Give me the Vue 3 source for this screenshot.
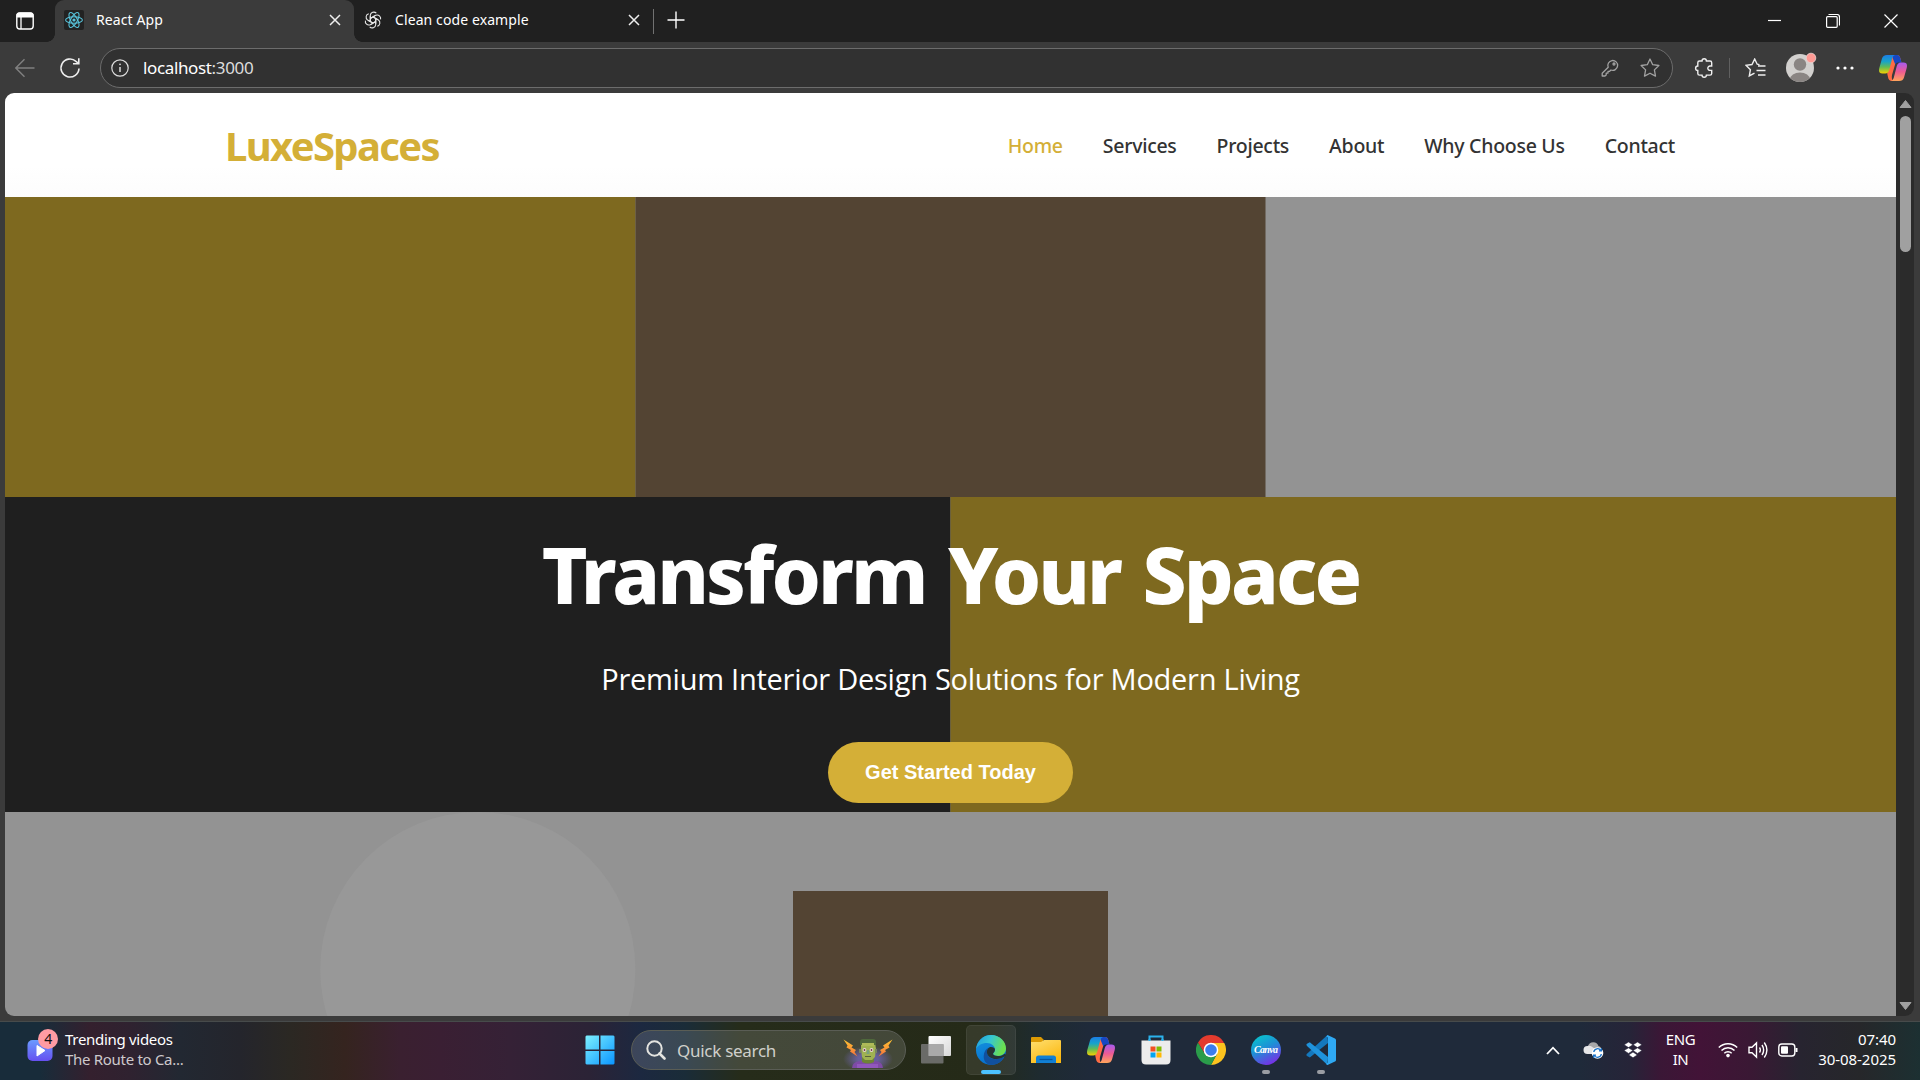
<script setup>
const links = ['Home', 'Services', 'Projects', 'About', 'Why Choose Us', 'Contact']
</script>

<template>
  <div class="screen">
    <header class="tabstrip">
      <div class="workspace">
        <svg width="20" height="20" viewBox="0 0 20 20" fill="none" stroke="#fff"><rect x="1.8" y="2" width="16.4" height="16" rx="3" stroke-width="1.4" /><path d="M2 3.5Q2 2 4 2h12q2 0 2 1.5V6H2z" fill="#fff" /><path d="M6 6v12" stroke-width="1.3" /></svg>
      </div>
      <div class="tab active">
        <svg class="fav" width="20" height="20" viewBox="0 0 20 20"><rect width="20" height="20" rx="2" fill="#222" /><g fill="none" stroke="#58c4dc" stroke-width="1.1"><ellipse cx="10" cy="10" rx="8.4" ry="3.3" /><ellipse cx="10" cy="10" rx="8.4" ry="3.3" transform="rotate(60 10 10)" /><ellipse cx="10" cy="10" rx="8.4" ry="3.3" transform="rotate(120 10 10)" /></g><circle cx="10" cy="10" r="1.6" fill="#58c4dc" /></svg>
        <span>React App</span>
        <svg class="x" width="12" height="12" viewBox="0 0 12 12"><path d="M1 1l10 10M11 1L1 11" /></svg>
      </div>
      <div class="tab">
        <svg class="fav" width="18" height="18" viewBox="0 0 18 18" fill="none" stroke="#e8e8e8" stroke-width="1.1"><g v-for="a in 6" :key="a" :transform="`rotate(${a * 60} 9 9)`"><path d="M6.300 10.500V4.300A3.500 3.500 0 0 1 12.300 2.200M6.300 7.400L10.800 4.800" /></g></svg>
        <span>Clean code example</span>
        <svg class="x" width="12" height="12" viewBox="0 0 12 12"><path d="M1 1l10 10M11 1L1 11" /></svg>
      </div>
      <i class="split"></i>
      <svg class="plus" width="18" height="18" viewBox="0 0 18 18"><path d="M9 0.5v17M0.5 9h17" /></svg>
      <div class="caption">
        <svg width="14" height="14" viewBox="0 0 14 14"><path d="M0 6.5h13" /></svg>
        <svg width="14" height="14" viewBox="0 0 14 14"><path d="M2.5 0.5H11Q13.5 .5 13.5 3v8.5" /><rect x="0.6" y="2.7" width="10.6" height="10.6" rx="1" /></svg>
        <svg width="14" height="14" viewBox="0 0 14 14"><path d="M.5 .5l13 13M13.5 .5L.5 13.5" /></svg>
      </div>
    </header>

    <div class="toolbar">
      <svg class="back" width="20" height="20" viewBox="0 0 20 20"><path d="M19.5 10H1M9.5 1.2L.8 10l8.7 8.8" /></svg>
      <svg class="reload" width="22" height="22" viewBox="0 0 22 22"><path d="M20 11.5a9 9 0 1 1-3-7.2L19.6 6.500M19.8 1.200v5.600h-5.800" /></svg>
      <div class="omnibox">
        <svg width="18" height="18" viewBox="0 0 18 18" fill="none" stroke="#ddd"><circle cx="9" cy="9" r="8.2" stroke-width="1.2" /><path d="M9 8v5" stroke-width="1.5" /><circle cx="9" cy="5.300" r=".9" fill="#ddd" stroke="none" /></svg>
        <span class="url">localhost<b>:3000</b></span>
        <svg class="key" width="18" height="18" viewBox="0 0 18 18"><path d="M7.200 8.300A4.900 4.900 0 1 1 10 11L8.600 12.300H7v1.800H5.200V16L4 17H1.200v-2.700z" /><circle cx="13" cy="5" r="1" /></svg>
        <svg class="star" width="20" height="20" viewBox="0 0 20 20"><path d="M10 1l2.700 5.700 6.200.8-4.500 4.400 1.100 6.200L10 15.200l-5.500 2.900 1.100-6.200L1.100 7.500l6.200-.8z" /></svg>
      </div>
      <div class="actions">
        <svg width="20" height="20" viewBox="0 0 20 20"><path d="M5.500 3H8a2.200 2.200 0 0 1 4.400 0h3.600q1.700 0 1.700 1.700v3.300H16a2.200 2.200 0 1 0 0 4.400h1.700v3q0 1.700-1.700 1.700h-3.600a2.200 2.200 0 0 1-4.400 0H5.500Q3.800 17.100 3.800 15.400v-3a2.200 2.200 0 0 1 0-4.400V4.700Q3.800 3 5.500 3z" /></svg>
        <i></i>
        <svg width="21" height="20" viewBox="0 0 21 20"><path d="M14.500 6.600l-2.300-.4L9.700 1 7 6.500l-6 .8L5.400 11.700l-1.100 6.200 5.200-2.800M13 8h7.500M11.500 12.500h9M13 17h7.500" /></svg>
        <svg class="avatar" width="32" height="32" viewBox="0 0 32 32"><defs><clipPath id="av"><circle cx="15" cy="17" r="14" /></clipPath></defs><g clip-path="url(#av)" stroke="none"><rect width="32" height="32" fill="#d2d0ce" /><circle cx="15" cy="13.500" r="6.200" fill="#8a8583" /><ellipse cx="15" cy="28.500" rx="10" ry="7" fill="#8a8583" /></g><circle cx="26" cy="7" r="4.800" fill="#ff9a94" stroke="#e9d6d4" stroke-width=".8" /></svg>
        <svg width="18" height="6" viewBox="0 0 18 6"><g fill="#fff" stroke="none"><circle cx="2" cy="3" r="1.600" /><circle cx="9" cy="3" r="1.600" /><circle cx="16" cy="3" r="1.600" /></g></svg>
        <svg width="28" height="26" viewBox="0 0 28 26"><use href="#copilot" /></svg>
      </div>
    </div>

    <div class="viewport">
      <div class="page">
        <nav class="nav">
          <span class="logo">LuxeSpaces</span>
          <ul>
            <li v-for="(l, i) in links" :key="l" :class="{ on: i === 0 }">{{ l }}</li>
          </ul>
        </nav>
        <section class="hero">
          <svg class="art" width="1891" height="819" viewBox="0 0 1891 819">
            <rect width="1891" height="819" fill="#939393" />
            <rect width="630.500" height="300" fill="#7e691f" />
            <rect x="630.500" width="630" height="300" fill="#534433" />
            <rect y="300" width="945.500" height="315" fill="#1f1f1f" />
            <rect x="945.500" y="300" width="945.500" height="315" fill="#7e691f" />
            <circle cx="472.800" cy="772.600" r="157.600" fill="#989898" />
            <rect x="788" y="694" width="315" height="125" fill="#534433" />
          </svg>
          <h1>Transform Your Space</h1>
          <p>Premium Interior Design Solutions for Modern Living</p>
          <button>Get Started Today</button>
        </section>
      </div>
      <div class="scroll">
        <svg width="13" height="10" viewBox="0 0 13 10"><path d="M6.500 1.500L12 8.500H1z" /></svg>
        <i></i>
        <svg class="down" width="13" height="10" viewBox="0 0 13 10"><path d="M6.500 8.500L12 1.500H1z" /></svg>
      </div>
    </div>

    <footer class="taskbar">
      <div class="widget">
        <svg width="28" height="32" viewBox="0 0 28 32"><defs><linearGradient id="vid" x2="0" y2="1"><stop stop-color="#6b9bff" /><stop offset="1" stop-color="#6650f0" /></linearGradient></defs><rect x=".5" y="10" width="25" height="21" rx="5" fill="url(#vid)" /><path d="M10 15.500l8 5-8 5.500z" fill="#fff" stroke="#fff" stroke-linejoin="round" /></svg>
        <em>4</em>
        <div><span>Trending videos</span><small>The Route to Ca...</small></div>
      </div>
      <div class="apps">
        <svg width="30" height="30" viewBox="0 0 30 30"><defs><linearGradient id="win" x2="1" y2="1"><stop stop-color="#7df0ff" /><stop offset="1" stop-color="#0a95ff" /></linearGradient></defs><path d="M1.500 .5H14v14H.5v-13zM15.500 .5h13l1 1v13h-14zM.5 16H14v13.500H1.500l-1-1zM15.500 16h14v12.500l-1 1h-13z" fill="url(#win)" /></svg>
        <div class="search">
          <svg width="20" height="20" viewBox="0 0 20 20" fill="none" stroke="#e4e4e0" stroke-width="2"><circle cx="8.500" cy="8.500" r="7.200" /><path d="M13.500 13.500l5 5" stroke-width="2.600" stroke-linecap="round" /></svg>
          <span>Quick search</span>
          <svg class="frank" width="50" height="30" viewBox="0 0 50 30">
            <defs><radialGradient id="glow"><stop offset=".4" stop-color="#7065b5" stop-opacity=".8" /><stop offset="1" stop-color="#7065b5" stop-opacity="0" /></radialGradient><linearGradient id="bolt" x2="0" y2="1"><stop stop-color="#ffc531" /><stop offset="1" stop-color="#f5703c" /></linearGradient></defs>
            <ellipse cx="25" cy="21" rx="25" ry="13" fill="url(#glow)" />
            <path d="M9 30q0-6 8-7h15q8 1 8 7z" fill="#7e4ba6" /><path d="M14 26h21v4H14z" fill="#9157bd" />
            <path d="M19 18h12v6q-6 3-12 0z" fill="#6e8436" />
            <path d="M18 4h14l1 7-1 8-3 3h-7l-3-3-1-8z" fill="#a0b252" /><path d="M17 4q0-3 3-3h10q3 0 3 3v3H17z" fill="#4f693c" /><path d="M19 5h12v3H19z" fill="#aebb58" />
            <path d="M16 11h2v4h-2zM32 11h2v4h-2z" fill="#77845f" /><circle cx="21.500" cy="12" r="1.900" fill="#e7dad5" /><circle cx="28.500" cy="12" r="1.900" fill="#e7dad5" /><circle cx="21.500" cy="12" r=".9" fill="#703b41" /><circle cx="28.500" cy="12" r=".9" fill="#703b41" /><path d="M24 12h2l.5 4h-3z" fill="#78a17c" /><path d="M22 18.500h6" stroke="#59633a" />
            <path d="M.5 1.500L10 7.500l-1.500 2L13 12l-1.500 2 3 4.500-7.500-5 1-1.500-4.500-2.500 1-2z" fill="url(#bolt)" /><path d="M49.500 1.500L40 7.500l1.500 2L37 12l1.500 2-3 4.500 7.500-5-1-1.500 4.500-2.500-1-2z" fill="url(#bolt)" />
          </svg>
        </div>
        <svg width="30" height="30" viewBox="0 0 30 30"><defs><linearGradient id="tv" x2="1" y2="1"><stop stop-color="#fff" /><stop offset="1" stop-color="#d8d8d8" /></linearGradient></defs><rect x="7.500" y="1" width="22.500" height="20" rx="1" fill="url(#tv)" /><rect x="0" y="9" width="22.500" height="19.500" rx="1" fill="#777" fill-opacity=".85" /><path d="M7.500 9h15v12h-15z" fill="#a9a9a9" /></svg>
        <div class="app sel">
          <svg width="30" height="30" viewBox="0 0 30 30"><defs><linearGradient id="e1" x1="0" x2="1" y2=".3"><stop stop-color="#1f9be0" /><stop offset=".5" stop-color="#36c6d2" /><stop offset="1" stop-color="#6be04f" /></linearGradient><linearGradient id="e2" x2=".3" y2="1"><stop stop-color="#1797e0" /><stop offset="1" stop-color="#0670cf" /></linearGradient></defs><circle cx="15" cy="15" r="15" fill="url(#e2)" /><path d="M0 14.500C1 5.500 7.500 0 15 0c9 0 15 6.500 15 13.500 0 4.500-3.500 7.500-8 7.500-3.500 0-5-1.200-5-2.200 0-.8 2-1.600 2-4.300C19 11 15.500 8 11 8 5.500 8 1.500 10.500 0 14.500z" fill="url(#e1)" /><path d="M28.300 21.500C25.700 26.700 20.500 30 15 30 10 29.500 7.500 25.500 7.700 21c.2-4 2-7 5-8.500-1.700 1.500-2 3.500-1.800 5 .5 4.500 5 7 9.600 6.600 3-.2 5.500-1.200 7.800-2.600z" fill="#11509e" /><path d="M28.500 19.500l2 .5-2 3z" fill="#303b34" /><path d="M17 18.800c0 1.200 1.500 2.200 5 2.200 3 0 5-.8 6.500-2.300L30 20l-1.700 1.500c-2.300 1.600-4.800 2.400-7.800 2.600-5 .2-9.100-2.600-9.600-6.600-.2-3 1.500-5.500 4.100-5.500 2.500 0 4 1.200 4 2.500 0 2.700-2 3.500-2 4.300z" fill="#263333" /></svg>
        </div>
        <div class="app"><svg width="30" height="28" viewBox="0 0 30 28"><defs><linearGradient id="fo" x2=".6" y2="1"><stop stop-color="#ffdf70" /><stop offset="1" stop-color="#fbb912" /></linearGradient></defs><path d="M0 2q0-1 1-1h9l3 3h-1v5H0z" fill="#dc9a04" /><path d="M0 6h10l3-2h16q1 0 1 1v22H0z" fill="url(#fo)" /><path d="M5 27v-5q0-2.500 2.500-2.500h15q2.500 0 2.500 2.500v5z" fill="#1180d5" /><path d="M8.500 23.500h13" stroke="#0756a0" stroke-width="1.300" /></svg></div>
        <div class="app"><svg width="28" height="26" viewBox="0 0 28 26"><defs><linearGradient id="c1" x2="0" y2="1"><stop stop-color="#1c7de6" /><stop offset=".35" stop-color="#18a3ca" /><stop offset=".65" stop-color="#62bc55" /><stop offset="1" stop-color="#f5d000" /></linearGradient><linearGradient id="c2" x2="0" y2="1"><stop stop-color="#a65af0" /><stop offset=".5" stop-color="#ee5b93" /><stop offset="1" stop-color="#ffa55b" /></linearGradient></defs>
          <g id="copilot"><path d="M11 0h7.500q2 0 2.800 3l1 4h-5.500L13 20q-1 5 2 6h-2Q9.500 26 9 22l-.8-3.500L11 6z" fill="#ff6b43" /><path d="M13 0h5.500q2 0 2.700 2.500l1.300 5h-3.500q-2 0-2.700 2L14 4z" fill="#1747c4" /><path d="M8 0h8q-2 .5-2.700 3L10.200 15q-1 3.500-4 3.500H3.500Q-1 18.500.3 13L3 3.500Q4 0 8 0z" fill="url(#c1)" /><path d="M20 26h-8q2-.5 2.700-3l3.100-12q1-3.500 4-3.500h2.700q4.500 0 3.200 5.500L25 22.500Q24 26 20 26z" fill="url(#c2)" /></g></svg></div>
        <div class="app"><svg width="30" height="30" viewBox="0 0 30 30"><path d="M8.500 7V1.500h13V7" fill="none" stroke="#2bb2ec" stroke-width="2" /><path d="M.5 5.500h29V25q0 4.500-4.500 4.500H5Q.5 29.500 .5 25z" fill="#ececec" /><path d="M8.500 6V4M21.500 6V4" stroke="#2bb2ec" stroke-width="2" /><path d="M9.500 11.500h5v5h-5z" fill="#f35022" /><path d="M15.500 11.500h5v5h-5z" fill="#80bb03" /><path d="M9.500 17.500h5v5h-5z" fill="#04a5f0" /><path d="M15.500 17.500h5v5h-5z" fill="#ffb904" /></svg></div>
        <div class="app"><svg width="30" height="30" viewBox="0 0 30 30"><path d="M15 15L2 7.500A15 15 0 0 1 28 7.500z" fill="#e33b2e" /><path d="M15 8h13.300A15 15 0 0 1 15 30l6.200-11.500z" fill="#fcc31e" /><path d="M2 7.500A15 15 0 0 0 15 30l6.200-11.500H8.700z" fill="#2a9c4a" /><path d="M2 7.500L8.800 18.500 15 8z" fill="#e33b2e" /><circle cx="15" cy="15" r="7.300" fill="#fff" /><circle cx="15" cy="15" r="5.800" fill="#3b7ded" /></svg></div>
        <div class="app run"><svg width="30" height="30" viewBox="0 0 30 30"><defs><linearGradient id="cv" x1=".2" x2=".7" y2="1"><stop stop-color="#08c5cc" /><stop offset=".45" stop-color="#1e90d6" /><stop offset="1" stop-color="#7d2ae8" /></linearGradient></defs><circle cx="15" cy="15" r="15" fill="url(#cv)" /><text x="15" y="18" text-anchor="middle" font-family="Liberation Serif, serif" font-style="italic" font-weight="700" font-size="10" fill="#fff" stroke="none" textLength="24">Canva</text></svg></div>
        <div class="app run"><svg width="30" height="30" viewBox="0 0 30 30"><path d="M22 8L3.800 22.500 1 21q-1.200-1 0-2.200L21.500 0z" fill="#1478bd" /><path d="M22 22L3.800 7.200 1 8.700q-1.200 1 0 2.200L21.500 30z" fill="#1f93dc" /><path d="M21.500 0L29 3.500q1 .5 1 1.500v20q0 1-1 1.500L21.500 30q-1.200 0-1.200-1.500l1.700-1V2.500l-1.700-1z" fill="#2fa9f3" /></svg></div>
      </div>
      <div class="tray">
        <svg width="14" height="9" viewBox="0 0 14 9"><path d="M1 8l6-6.300L13 8" stroke-width="1.800" /></svg>
        <svg class="cloud" width="21" height="20" viewBox="0 0 21 20"><g stroke="none"><path d="M5 6a5.500 5.500 0 0 1 10.500 0q3.500 1 3.500 6H6z" fill="#a8a8aa" /><path d="M4.500 14a4 4 0 0 1 0-8q3-1 5.500 1.500L18 13v1z" fill="#e6e6e8" /><circle cx="14.500" cy="13" r="5.800" fill="#fff" /></g><path d="M10.800 12a3.800 3.800 0 0 1 7-1.500M18.300 14a3.800 3.800 0 0 1-7 1.500M18.400 8.300v2.500H16M10.600 17.700v-2.500H13" stroke="#1670c9" stroke-width="1.300" /></svg>
        <svg class="box" width="18" height="16" viewBox="0 0 18 16"><path d="M4.500 0L9 2.800 4.500 5.600 0 2.800zM13.500 0L18 2.800l-4.500 2.800L9 2.800zM4.500 5.800L9 8.600l-4.500 2.800L0 8.600zM13.500 5.800L18 8.600l-4.500 2.800L9 8.600zM9 10l4.300 2.900L9 15.800l-4.300-2.900z" fill="#fff" stroke="#26243a" stroke-width=".6" /></svg>
        <div class="lang"><span>ENG</span><span>IN</span></div>
        <svg class="wifi" width="20" height="16" viewBox="0 0 20 16"><path d="M.8 5.500a13 13 0 0 1 18.400 0M3.500 8.500a9 9 0 0 1 13 0M6.300 11.200a5.200 5.200 0 0 1 7.400 0" stroke-width="1.500" /><circle cx="10" cy="13.600" r="1.800" fill="#fff" stroke="none" /></svg>
        <svg class="vol" width="20" height="18" viewBox="0 0 20 18"><path d="M1 6.300h3L8.500 2v14L4 11.700H1zM11.500 6.500q1.700 2.500 0 5M14 4q3.300 5 0 10M16.300 1.500q5.200 7.500 0 15" stroke-width="1.400" /></svg>
        <svg class="bat" width="20" height="14" viewBox="0 0 20 14"><rect x=".8" y="1" width="16" height="12" rx="3" stroke-width="1.400" /><rect x="3" y="3.200" width="7" height="7.600" rx="1" fill="#fff" stroke="none" /><path d="M18.500 5v4" stroke-width="2" /></svg>
        <div class="clock"><span>07:40</span><span>30-08-2025</span></div>
      </div>
    </footer>
  </div>
</template>

<style>
body { margin: 0; background: #3b3b3b; overflow: hidden; }
</style>

<style scoped>
.screen { width: 1920px; height: 1080px; display: flex; flex-direction: column; background: #3b3b3b; font-family: "Noto Sans", "Open Sans", sans-serif; overflow: hidden; white-space: nowrap; }
svg { display: block; flex: none; }
.tabstrip { height: 42px; display: flex; align-items: center; background: #202020; color: #fff; font-size: 14px; letter-spacing: .1px; }
.workspace { width: 55px; padding-left: 15px; box-sizing: border-box; }
.tab { width: 299px; height: 42px; box-sizing: border-box; display: flex; align-items: center; padding: 0 13px 2px 9px; position: relative; }
.tab .fav { margin-right: 12px; }
.tab .x { margin-left: auto; fill: none; stroke: #eee; stroke-width: 1.5; }
.tab + .tab { padding-left: 10px; }
.tab + .tab .fav { margin-right: 13px; }
.tab span { margin-top: -1px; }
.tab.active { background: #3b3b3b; border-radius: 9px 9px 0 0; }
.tab.active::before, .tab.active::after { content: ""; position: absolute; bottom: 0; width: 8px; height: 8px; }
.tab.active::before { left: -8px; background: radial-gradient(circle at 0 0, transparent 7.5px, #3b3b3b 8px); }
.tab.active::after { right: -8px; background: radial-gradient(circle at 100% 0, transparent 7.5px, #3b3b3b 8px); }
.split { width: 1px; height: 25px; background: #717171; }
.plus { margin: 0 0 3px 13px; fill: none; stroke: #fff; stroke-width: 1.4; }
.caption { margin-left: auto; display: flex; gap: 44px; padding-right: 22px; }
.caption svg { fill: none; stroke: #fff; stroke-width: 1.2; }
.toolbar { height: 51px; display: flex; align-items: center; }
.back { margin-left: 15px; fill: none; stroke: #808080; stroke-width: 1.4; }
.reload { margin-left: 24px; fill: none; stroke: #eee; stroke-width: 1.6; }
.omnibox { margin-left: 19px; width: 1573px; height: 40px; box-sizing: border-box; border: 1px solid #6c6c6c; border-radius: 20px; background: #313131; display: flex; align-items: center; padding: 0 12px 0 10px; color: #fff; font-size: 17px; }
.url { margin-left: 14px; letter-spacing: -.36px; }
.url b { font-weight: 400; color: #dcdcdc; }
.key { margin-left: auto; margin-right: 21px; }
.key, .star { fill: none; stroke: #a2a2a2; stroke-width: 1.3; stroke-linejoin: round; }
.actions { display: flex; align-items: center; fill: none; stroke: #eee; stroke-width: 1.4; margin-left: 21px; }
.actions i { width: 1px; height: 20px; background: #606060; margin: 0 15px 0 15px; }
.avatar { margin: -2px 19px 0 19px; }
.actions svg:last-child { margin-left: 25px; stroke: none; }
.viewport { width: 1909px; height: 923px; margin-left: 5px; display: flex; border-radius: 9px; overflow: hidden; }
.page { width: 1891px; }
.nav { height: 104px; box-sizing: border-box; padding: 0 221px 0 220px; background: linear-gradient(#fff 70%, #fcfcfc); display: flex; align-items: center; justify-content: space-between; }
.logo { color: #d4af37; font-size: 40px; font-weight: 700; letter-spacing: -1.65px; }
.nav ul { display: flex; gap: 40px; margin: 0; padding: 0; list-style: none; font-size: 19.5px; font-weight: 550; letter-spacing: -.27px; color: #333; }
.nav .on { color: #d4af37; }
.hero { height: 819px; box-sizing: border-box; padding-top: 329px; position: relative; display: flex; flex-direction: column; align-items: center; color: #fff; }
.art { position: absolute; left: 0; top: 0; }
.hero h1, .hero p, .hero button { position: relative; margin: 0; }
.hero h1 { font-size: 78.5px; line-height: 96px; font-weight: 800; letter-spacing: -2.9px; word-spacing: 5px; }
.hero p { margin-top: 33px; font-family: "Open Sans", "Noto Sans", sans-serif; font-size: 29px; line-height: 48px; letter-spacing: -.26px; }
.hero button { margin-top: 39px; width: 245px; height: 61px; padding: 0; border: 0; border-radius: 31px; background: #d4af37; color: #fff; font: 700 20px "Liberation Sans", sans-serif; }
.scroll { width: 18px; background: #2b2b2b; display: flex; flex-direction: column; align-items: center; padding: 6px 0 5px; box-sizing: border-box; }
.scroll svg { fill: #a0a0a0; stroke: #a0a0a0; stroke-linejoin: round; }
.scroll i { width: 11px; height: 136px; border-radius: 6px; background: #a0a0a0; margin-top: 7px; }
.scroll .down { margin-top: auto; }
.taskbar { margin-top: 5px; height: 59px; box-sizing: border-box; padding-bottom: 2px; border-top: 1px solid #474b4b; position: relative; display: flex; align-items: center; color: #fff; background: linear-gradient(90deg, #182c3a 0, #182c3a 40px, #34202e 90px, #2f2230 130px, #222832 180px, #24252c 240px, #2b2823 290px, #35241f 345px, #3a2030 400px, #3a1f33 440px, #352136 510px, #2b2336 590px, #1c2840 640px, #1a2c38 685px, #262c1a 740px, #252a18 980px, #1e2b30 1040px, #1f2a3a 1090px, #1f2a3a 1580px, #262438 1630px, #3a1736 1660px, #421337 1700px, #3a1834 1750px, #272430 1800px, #26272a 1860px, #1c3032 1920px); }
.widget { display: flex; align-items: center; margin-left: 27px; width: 558px; position: relative; font-size: 15px; line-height: 20px; letter-spacing: -.3px; }
.widget svg { margin: -8px 10px 0 0; }
.widget em { position: absolute; left: 11px; top: -3px; width: 20px; height: 20px; border-radius: 50%; background: #ff9ba3; color: #111; font-style: normal; text-align: center; font-size: 14px; }
.widget div { display: flex; flex-direction: column; margin-top: -3px; }
.widget small { font-size: 15px; color: #cdc9cc; }
.apps { display: flex; align-items: center; }
.search { margin: 0 15px 0 16px; width: 275px; height: 40px; box-sizing: border-box; border: 1px solid #5a5d55; border-radius: 20px; background: rgba(255, 255, 255, .14); display: flex; align-items: center; padding: 0 12px 0 14px; color: #cfd0cb; font-size: 17px; letter-spacing: -.28px; }
.search span { margin-left: 11px; }
.frank { margin-left: auto; margin-top: 6px; }
.app { width: 50px; height: 50px; margin-left: 5px; box-sizing: border-box; border-radius: 5px; display: flex; align-items: center; justify-content: center; position: relative; }
.app.sel { margin-left: 15px; background: rgba(255, 255, 255, .08); box-shadow: inset 0 0 0 1px rgba(255, 255, 255, .06); }
.sel::after, .run::after { content: ""; position: absolute; bottom: 1px; width: 20px; height: 4px; border-radius: 2px; background: #4cc2ff; }
.run::after { width: 8px; background: #9a9da3; }
.tray { margin-left: auto; margin-right: 24px; display: flex; align-items: center; fill: none; stroke: #fff; font-size: 15px; line-height: 20px; }
.cloud { margin-left: 23px; }
.box { margin-left: 20px; }
.lang { margin: -3px 0 0 24px; width: 29px; display: flex; flex-direction: column; align-items: center; letter-spacing: -.4px; }
.wifi { margin-left: 23px; }
.vol { margin-left: 10px; }
.bat { margin-left: 10px; }
.clock { width: 98px; margin-top: -3px; display: flex; flex-direction: column; align-items: flex-end; letter-spacing: -.05px; }
</style>
